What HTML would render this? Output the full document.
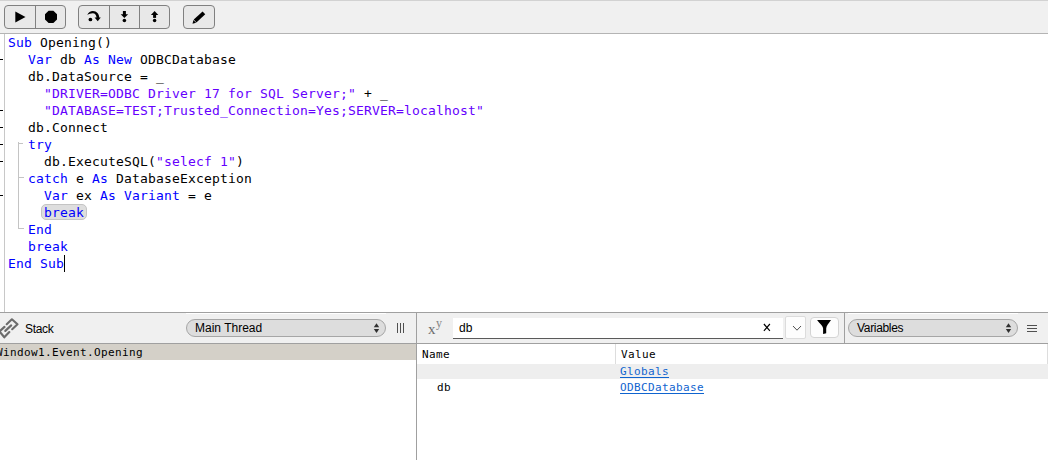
<!DOCTYPE html>
<html lang="en">
<head>
<meta charset="utf-8">
<title>Debugger</title>
<style>
html,body{margin:0;padding:0;background:#fff;}
body{width:1048px;height:460px;position:relative;overflow:hidden;font-family:"Liberation Sans",sans-serif;}
.abs{position:absolute;}
/* toolbar */
#toolbar{left:0;top:0;width:1048px;height:33px;background:#f0f0f0;}
#topline{left:0;top:0;width:1048px;height:1px;background:#d2d2d2;}
#tbborder{left:0;top:33px;width:1048px;height:1px;background:#b4b4b4;}
.btn{position:absolute;top:5px;height:24px;box-sizing:border-box;border:1px solid #808080;border-radius:4px;background:#e8e8e8;}
.sep{position:absolute;top:0;width:1px;height:22px;background:#808080;}
.btn svg{position:absolute;left:-1px;top:-1px;}
/* code */
#code{left:0;top:34px;width:1048px;height:278px;background:#fff;}
#gutterline{left:4px;top:34px;width:1px;height:278px;background:#c8c8c8;}
.tick{position:absolute;left:0;width:3px;height:1px;background:#000;}
.ln{position:absolute;height:17px;line-height:17px;white-space:pre;font-family:"DejaVu Sans Mono","Liberation Mono",monospace;font-size:13px;color:#000;letter-spacing:0.174px;}
.k{color:#0000ff;}
.s{color:#6500fe;}
.blk{position:absolute;background:#c4c4c4;}
#hl{left:41px;top:203.8px;width:46px;height:16.6px;box-sizing:border-box;border:1px solid #c4c4c4;border-radius:5px;background:#dedede;}
#caret{left:64px;top:255px;width:1px;height:17px;background:#000;}
/* bottom */
#split{left:0;top:312px;width:1048px;height:1px;background:#a0a0a0;}
#hdr{left:0;top:313px;width:1048px;height:30px;background:#f0f0f0;}
#hdrborder{left:0;top:343px;width:1048px;height:1px;background:#a0a0a0;}
#vdiv{left:416px;top:313px;width:1px;height:147px;background:#a0a0a0;}
#vdiv2{left:844px;top:313px;width:1px;height:30px;background:#a0a0a0;}
.pill{position:absolute;top:319px;height:18px;box-sizing:border-box;border:1px solid #a6a6a6;border-radius:9px;background:#dddddd;}
.ui{position:absolute;font-family:"Liberation Sans",sans-serif;font-size:12px;color:#000;white-space:pre;line-height:14px;}
.hi{position:absolute;top:313px;height:1px;background:#fff;}
.mono{position:absolute;font-family:"DejaVu Sans Mono","Liberation Mono",monospace;font-size:11px;letter-spacing:0.378px;color:#000;white-space:pre;line-height:16px;height:16px;}
.lnk{color:#1064cf;text-decoration:underline;text-underline-offset:2px;text-decoration-thickness:1px;}
#stackrow{left:0;top:344px;width:416px;height:16px;background:#d4d0c8;}
#grow{left:417px;top:364px;width:631px;height:15px;background:#eeeeee;}
#field{left:452.5px;top:317.5px;width:330.2px;height:21.3px;box-sizing:border-box;background:#fff;border-bottom:1px solid #5a5a5a;}
#dd{left:785.2px;top:316.2px;width:20.4px;height:22.5px;box-sizing:border-box;background:#fdfdfd;border:1px solid #dcdcdc;border-radius:2px;}
#flt{left:810px;top:317px;width:29px;height:21px;box-sizing:border-box;background:#fdfdfd;border:1px solid #d4d4d4;border-radius:4px;}
</style>
</head>
<body>
<!-- toolbar -->
<div id="toolbar" class="abs"></div>
<div id="topline" class="abs"></div>
<div id="tbborder" class="abs"></div>

<div class="btn" style="left:4px;width:62px;">
  <div class="sep" style="left:30px;"></div>
  <svg width="62" height="24" viewBox="0 0 62 24">
    <polygon points="11.3,6.4 11.3,17.5 21.5,11.95" fill="#000"/>
    <polygon points="44.6,5.7 49.4,5.7 53,9.3 53,14.5 49.4,18.1 44.6,18.1 41,14.5 41,9.3" fill="#000"/>
  </svg>
</div>

<div class="btn" style="left:78px;width:92px;">
  <div class="sep" style="left:30px;"></div>
  <div class="sep" style="left:60px;"></div>
  <svg width="92" height="24" viewBox="0 0 92 24">
    <!-- step over -->
    <path d="M9.3,10 C10.3,7.2 12.6,5.9 14.9,5.9 C18.7,5.9 21.3,9 21.3,12.9 L18.5,12.9 C18.5,10.2 17,8.3 14.7,8.3 C12.6,8.3 10.9,9 9.3,10 Z" fill="#000"/>
    <polygon points="16.6,12.6 22.8,12.6 19.7,16.2" fill="#000"/>
    <circle cx="12.4" cy="14.5" r="1.85" fill="#000"/>
    <!-- step in -->
    <rect x="44.9" y="6" width="3" height="4" fill="#000"/>
    <polygon points="42.7,9.2 50.1,9.2 46.4,12.9" fill="#000"/>
    <circle cx="46.4" cy="15.5" r="1.8" fill="#000"/>
    <!-- step out -->
    <polygon points="72.9,10 80.3,10 76.6,6" fill="#000"/>
    <rect x="75.1" y="9.6" width="3" height="3.3" fill="#000"/>
    <circle cx="76.6" cy="15.6" r="1.75" fill="#000"/>
  </svg>
</div>

<div class="btn" style="left:183px;width:32px;">
  <svg width="32" height="24" viewBox="0 0 32 24">
    <path d="M12.1,16 L20.9,7.9" fill="none" stroke="#000" stroke-width="3.9"/>
    <polygon points="10.4,14.9 13.1,17.8 9.5,18.8" fill="#000"/>
  </svg>
</div>

<!-- code area -->
<div id="code" class="abs"></div>
<div id="gutterline" class="abs"></div>
<div class="tick" style="top:59px;"></div>
<div class="tick" style="top:110px;"></div>
<div class="tick" style="top:127px;"></div>
<div class="tick" style="top:144px;"></div>
<div class="tick" style="top:161px;"></div>
<div class="tick" style="top:195px;"></div>

<div class="blk" style="left:18px;top:142px;width:1px;height:87px;"></div>
<div class="blk" style="left:18px;top:143px;width:5px;height:1px;"></div>
<div class="blk" style="left:18px;top:177px;width:6px;height:1px;"></div>
<div class="blk" style="left:18px;top:228px;width:6px;height:1px;"></div>

<div id="hl" class="abs"></div>

<div class="ln" style="left:8px;top:34px;"><span class="k">Sub</span> Opening()</div>
<div class="ln" style="left:28px;top:51px;"><span class="k">Var</span> db <span class="k">As</span> <span class="k">New</span> ODBCDatabase</div>
<div class="ln" style="left:28px;top:68px;">db.DataSource = _</div>
<div class="ln" style="left:44px;top:85px;"><span class="s">"DRIVER=ODBC Driver 17 for SQL Server;"</span> + _</div>
<div class="ln" style="left:44px;top:102px;"><span class="s">"DATABASE=TEST;Trusted_Connection=Yes;SERVER=localhost"</span></div>
<div class="ln" style="left:28px;top:119px;">db.Connect</div>
<div class="ln" style="left:28px;top:136px;"><span class="k">try</span></div>
<div class="ln" style="left:44px;top:153px;">db.ExecuteSQL(<span class="s">"selecf 1"</span>)</div>
<div class="ln" style="left:28px;top:170px;"><span class="k">catch</span> e <span class="k">As</span> DatabaseException</div>
<div class="ln" style="left:44px;top:187px;"><span class="k">Var</span> ex <span class="k">As</span> <span class="k">Variant</span> = e</div>
<div class="ln" style="left:44px;top:204px;"><span class="k">break</span></div>
<div class="ln" style="left:28px;top:221px;"><span class="k">End</span></div>
<div class="ln" style="left:28px;top:238px;"><span class="k">break</span></div>
<div class="ln" style="left:8px;top:255px;"><span class="k">End Sub</span></div>
<div id="caret" class="abs"></div>

<!-- bottom panels -->
<div id="split" class="abs"></div>
<div id="hdr" class="abs"></div>
<div id="hdrborder" class="abs"></div>
<div class="hi" style="left:186px;width:200px;"></div>
<div class="hi" style="left:848px;width:170px;"></div>

<!-- link icon -->
<svg class="abs" style="left:0;top:314px;" width="22" height="28" viewBox="0 0 22 28">
  <g fill="none" stroke="#6c6c6c" stroke-width="2.15" stroke-linejoin="round" stroke-linecap="round">
    <path d="M6.7,10.2 L11.9,5.3 L17.5,10.3 L12.2,15.2"/>
    <path d="M4.5,12.9 L-0.5,17.5 L4.3,23.3 L9.3,18.1"/>
    <path d="M5.3,16.9 L11.2,11.4"/>
  </g>
</svg>
<div class="ui" style="left:25px;top:322px;letter-spacing:-0.33px;">Stack</div>

<div class="pill" style="left:186px;width:200px;"></div>
<div class="ui" style="left:195px;top:321px;">Main Thread</div>
<svg class="abs" style="left:372px;top:322px;" width="10" height="12" viewBox="0 0 10 12">
  <polygon points="1.8,5.2 7.2,5.2 4.5,1.2" fill="#303030"/>
  <polygon points="1.8,6.9 7.2,6.9 4.5,10.9" fill="#303030"/>
</svg>
<div class="abs" style="left:397px;top:323px;width:1px;height:10px;background:#505050;"></div>
<div class="abs" style="left:400px;top:323px;width:1px;height:10px;background:#505050;"></div>
<div class="abs" style="left:403px;top:323px;width:1px;height:10px;background:#505050;"></div>

<div id="vdiv" class="abs"></div>
<div id="vdiv2" class="abs"></div>

<div class="abs" style="left:428px;top:321px;transform:translateY(-0.6px);font-family:'Liberation Serif',serif;font-size:15px;line-height:18px;color:#6c6c6c;white-space:pre;">x<span style="font-size:12px;position:relative;top:-7px;left:0.5px;color:#848484;">y</span></div>

<div id="field" class="abs"></div>
<div class="ui" style="left:459px;top:321px;">db</div>
<svg class="abs" style="left:761px;top:321px;" width="12" height="12" viewBox="0 0 12 12">
  <path d="M2.9,3 L8.9,9.9 M8.9,3 L2.9,9.9" fill="none" stroke="#000" stroke-width="1.15"/>
</svg>
<div id="dd" class="abs"></div>
<svg class="abs" style="left:790px;top:323px;" width="14" height="10" viewBox="0 0 14 10">
  <path d="M3,3 L7,7.2 L11,3" fill="none" stroke="#505050" stroke-width="1"/>
</svg>
<div id="flt" class="abs"></div>
<svg class="abs" style="left:814px;top:318px;" width="22" height="18" viewBox="0 0 22 18">
  <path d="M3.1,2.1 L17,2.1 C14.6,5.6 12.3,7.6 12.2,10.6 L12.2,15.3 L9.1,15.9 L9.1,10.6 C9,7.6 5.5,5.6 3.1,2.1 Z" fill="#000"/>
</svg>

<div class="pill" style="left:848px;width:170px;"></div>
<div class="ui" style="left:857px;top:321px;letter-spacing:-0.33px;">Variables</div>
<svg class="abs" style="left:1004px;top:322px;" width="10" height="12" viewBox="0 0 10 12">
  <polygon points="1.8,5.2 7.2,5.2 4.5,1.2" fill="#303030"/>
  <polygon points="1.8,6.9 7.2,6.9 4.5,10.9" fill="#303030"/>
</svg>
<div class="abs" style="left:1027px;top:325px;width:10px;height:1px;background:#505050;"></div>
<div class="abs" style="left:1027px;top:328px;width:10px;height:1px;background:#505050;"></div>
<div class="abs" style="left:1027px;top:331px;width:10px;height:1px;background:#505050;"></div>

<!-- stack list -->
<div id="stackrow" class="abs"></div>
<div class="mono" style="left:-4px;top:345px;">Window1.Event.Opening</div>

<!-- variables list -->
<div class="abs" style="left:615px;top:344px;width:1px;height:20px;background:#dddddd;"></div>
<div class="abs" style="left:1047px;top:344px;width:1px;height:20px;background:#dddddd;"></div>
<div id="grow" class="abs"></div>
<div class="mono" style="left:422px;top:347px;">Name</div>
<div class="mono" style="left:621px;top:347px;">Value</div>
<div class="mono" style="left:620px;top:364px;"><span class="lnk">Globals</span></div>
<div class="mono" style="left:437px;top:380px;">db</div>
<div class="mono" style="left:620px;top:380px;"><span class="lnk">ODBCDatabase</span></div>
</body>
</html>
